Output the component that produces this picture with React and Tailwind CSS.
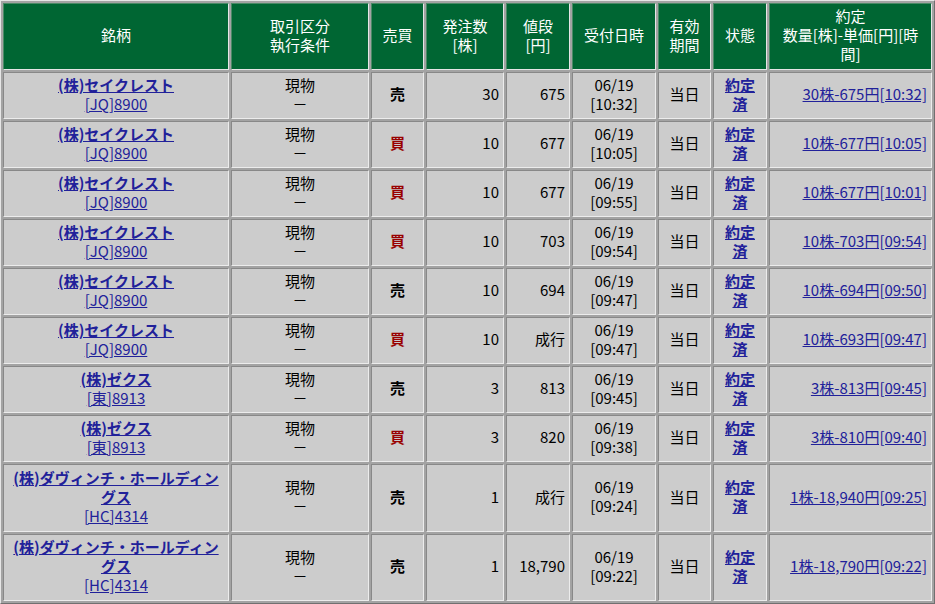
import React from "react";

const rows = [
  { name: "(株)セイクレスト", code: "[JQ]8900", side: "売", qty: "30", price: "675", time: "10:32", fill: "30株-675円[10:32]" },
  { name: "(株)セイクレスト", code: "[JQ]8900", side: "買", qty: "10", price: "677", time: "10:05", fill: "10株-677円[10:05]" },
  { name: "(株)セイクレスト", code: "[JQ]8900", side: "買", qty: "10", price: "677", time: "09:55", fill: "10株-677円[10:01]" },
  { name: "(株)セイクレスト", code: "[JQ]8900", side: "買", qty: "10", price: "703", time: "09:54", fill: "10株-703円[09:54]" },
  { name: "(株)セイクレスト", code: "[JQ]8900", side: "売", qty: "10", price: "694", time: "09:47", fill: "10株-694円[09:50]" },
  { name: "(株)セイクレスト", code: "[JQ]8900", side: "買", qty: "10", price: "成行", time: "09:47", fill: "10株-693円[09:47]" },
  { name: "(株)ゼクス", code: "[東]8913", side: "売", qty: "3", price: "813", time: "09:45", fill: "3株-813円[09:45]" },
  { name: "(株)ゼクス", code: "[東]8913", side: "買", qty: "3", price: "820", time: "09:38", fill: "3株-810円[09:40]" },
  { name: ["(株)ダヴィンチ・ホールディン", "グス"], code: "[HC]4314", side: "売", qty: "1", price: "成行", time: "09:24", fill: "1株-18,940円[09:25]", tall: "h-[68px]" },
  { name: ["(株)ダヴィンチ・ホールディン", "グス"], code: "[HC]4314", side: "売", qty: "1", price: "18,790", time: "09:22", fill: "1株-18,790円[09:22]", tall: "h-[67px]" },
];

const th =
  "bg-[#006633] text-white font-normal text-center align-middle border border-t-[#4a8a66] border-l-[#4a8a66] border-b-[#e6e6e6] border-r-[#e6e6e6] pt-[1px] pb-[5px] px-[2px]";
const td =
  "bg-[#cccccc] align-middle border border-t-[#888888] border-l-[#888888] border-b-[#ececec] border-r-[#ececec] pt-[1px] pb-[5px]";
const link = "text-[#21219a] underline";

export default function App() {
  return (
    <div
      className="w-[935px] h-[604px] bg-white text-black text-[15px] leading-[19px]"
      style={{ fontFamily: '"Noto Sans CJK JP", "Noto Sans", sans-serif' }}
    >
      <table className="w-[935px] table-fixed border-separate border-spacing-[2px] bg-[#a3a3a3] border border-t-[#e6e6e6] border-l-[#e6e6e6] border-b-[#707070] border-r-[#707070]">
        <colgroup>
          <col className="w-[226px]" />
          <col className="w-[138px]" />
          <col className="w-[53px]" />
          <col className="w-[78px]" />
          <col className="w-[64px]" />
          <col className="w-[84px]" />
          <col className="w-[53px]" />
          <col className="w-[54px]" />
          <col className="w-[163px]" />
        </colgroup>
        <thead>
          <tr className="h-[67px]">
            <th className={th}>銘柄</th>
            <th className={th}>取引区分<br />執行条件</th>
            <th className={th}>売買</th>
            <th className={th}>発注数<br />[株]</th>
            <th className={th}>値段<br />[円]</th>
            <th className={th}>受付日時</th>
            <th className={th}>有効<br />期間</th>
            <th className={th}>状態</th>
            <th className={th}>約定<br />数量[株]-単価[円][時<br />間]</th>
          </tr>
        </thead>
        <tbody>
          {rows.map((r, i) => (
            <tr key={i} className={r.tall || "h-[47px]"}>
              <td className={`${td} text-center`}>
                <span className={`${link} font-bold`}>
                  {Array.isArray(r.name) ? (
                    <>
                      {r.name[0]}
                      <br />
                      {r.name[1]}
                    </>
                  ) : (
                    r.name
                  )}
                </span>
                <br />
                <span className={link}>{r.code}</span>
              </td>
              <td className={`${td} text-center`}>
                現物
                <br />－
              </td>
              <td
                className={`${td} text-center font-bold ${
                  r.side === "買" ? "text-[#990000]" : "text-black"
                }`}
              >
                {r.side}
              </td>
              <td className={`${td} text-right pr-[4px]`}>{r.qty}</td>
              <td className={`${td} text-right pr-[4px]`}>{r.price}</td>
              <td className={`${td} text-center`}>
                06/19
                <br />[{r.time}]
              </td>
              <td className={`${td} text-center`}>当日</td>
              <td className={`${td} text-center`}>
                <span className={`${link} font-bold`}>
                  約定
                  <br />済
                </span>
              </td>
              <td className={`${td} text-right pr-[4px]`}>
                <span className={link}>{r.fill}</span>
              </td>
            </tr>
          ))}
        </tbody>
      </table>
    </div>
  );
}
